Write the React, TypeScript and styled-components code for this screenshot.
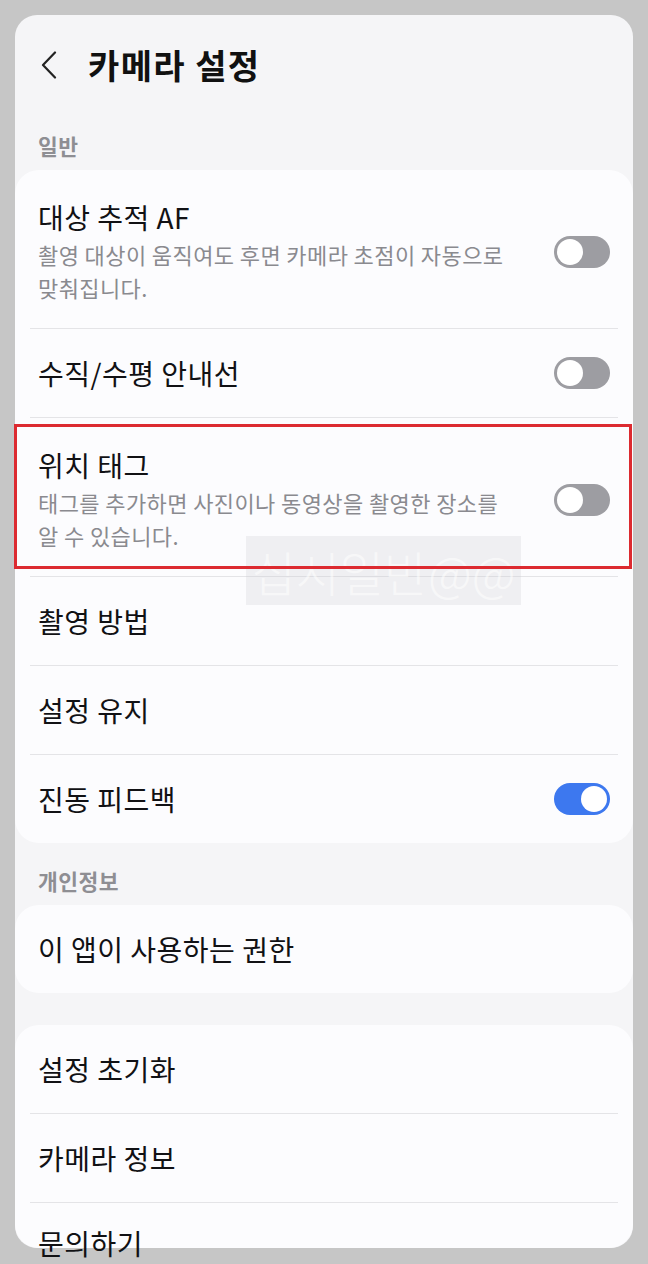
import React from "react";
import styled, { createGlobalStyle } from "styled-components";

const GlobalStyle = createGlobalStyle`
  html, body {
    margin: 0;
    padding: 0;
    overflow: hidden;
    background: #c6c6c6;
  }
  body {
    font-family: "Noto Sans CJK KR", "Noto Sans", sans-serif;
    color: #111114;
  }
`;

const Screen = styled.div`
  padding: 15px;
  height: 1264px;
  box-sizing: border-box;
`;

const Frame = styled.div`
  position: relative;
  height: 1233px;
  background: #f5f5f7;
  border-radius: 22px;
  display: flex;
  flex-direction: column;
`;

const Header = styled.header`
  display: flex;
  align-items: center;
  gap: 29px;
  padding: 28px 24px 21px;
  height: 44px;
`;

const BackButton = styled.button`
  border: 0;
  background: none;
  padding: 0;
  width: 20px;
  height: 30px;
  display: flex;
  align-items: center;
  justify-content: center;
  color: #222;
`;

const Title = styled.h1`
  margin: 0;
  font-size: 34px;
  line-height: 44px;
  font-weight: 700;
  color: #111;
  letter-spacing: 1.4px;
`;

const SectionLabel = styled.div`
  padding: 24px 23px 10px;
  font-size: 21.5px;
  line-height: 28px;
  font-weight: 700;
  color: #8e8e93;
  letter-spacing: 0.5px;
`;

const Card = styled.section<{ $gapTop?: number; $fixedHeight?: number }>`
  background: #fcfcfe;
  border-radius: 24px;
  margin-top: ${(p) => p.$gapTop ?? 0}px;
  ${(p) => (p.$fixedHeight ? `height: ${p.$fixedHeight}px;` : "")}
  display: flex;
  flex-direction: column;
`;

const Row = styled.div<{ $multi?: boolean; $highlight?: boolean; $h?: number }>`
  position: relative;
  display: flex;
  align-items: center;
  justify-content: space-between;
  gap: 20px;
  box-sizing: border-box;
  min-height: ${(p) => p.$h ?? 88}px;
  padding: ${(p) => (p.$multi ? "29px 23px 24px" : "0 23px")};
  flex-shrink: 0;
  ${(p) =>
    p.$highlight
      ? `
    &::after {
      content: "";
      position: absolute;
      top: 6px;
      bottom: 7px;
      left: -1px;
      right: 1px;
      border: 3px solid #dc2a30;
      z-index: 3;
      pointer-events: none;
    }
  `
      : ""}
`;

const Divider = styled.div`
  height: 1px;
  margin: 0 15px;
  background: #e4e4e7;
  flex-shrink: 0;
`;

const TextCol = styled.div`
  display: flex;
  flex-direction: column;
  gap: 3px;
  min-width: 0;
`;

const RowTitle = styled.div`
  font-size: 28px;
  line-height: 36px;
  font-weight: 400;
  color: #111114;
  letter-spacing: 0.5px;
  white-space: nowrap;
`;

const RowSub = styled.div`
  font-size: 22px;
  line-height: 33px;
  color: #8a8a8f;
  letter-spacing: 0.4px;
  white-space: nowrap;
`;

const Track = styled.div<{ $on?: boolean }>`
  position: relative;
  flex-shrink: 0;
  width: 56px;
  height: 32px;
  border-radius: 16px;
  background: ${(p) => (p.$on ? "#3d78ef" : "#9d9da2")};
`;

const Knob = styled.div<{ $on?: boolean }>`
  position: absolute;
  top: 3px;
  ${(p) => (p.$on ? "right: 3px;" : "left: 3px;")}
  width: 26px;
  height: 26px;
  border-radius: 50%;
  background: #ffffff;
`;

const Watermark = styled.div`
  position: absolute;
  left: 231px;
  top: 521px;
  width: 275px;
  height: 69px;
  background: rgba(205, 205, 212, 0.28);
  display: flex;
  align-items: center;
  justify-content: center;
  font-size: 48px;
  font-weight: 300;
  color: rgba(255, 255, 255, 0.55);
  z-index: 2;
  white-space: nowrap;
  overflow: hidden;
  pointer-events: none;
`;

const Toggle = ({ on }: { on?: boolean }) => (
  <Track $on={on}>
    <Knob $on={on} />
  </Track>
);

type Item = {
  title: string;
  sub?: React.ReactNode;
  toggle?: "on" | "off";
  highlight?: boolean;
  h?: number;
};

const general: Item[] = [
  {
    title: "대상 추적 AF",
    sub: (
      <>
        촬영 대상이 움직여도 후면 카메라 초점이 자동으로
        <br />
        맞춰집니다.
      </>
    ),
    toggle: "off",
  },
  { title: "수직/수평 안내선", toggle: "off" },
  {
    title: "위치 태그",
    sub: (
      <>
        태그를 추가하면 사진이나 동영상을 촬영한 장소를
        <br />알 수 있습니다.
      </>
    ),
    toggle: "off",
    highlight: true,
  },
  { title: "촬영 방법" },
  { title: "설정 유지" },
  { title: "진동 피드백", toggle: "on" },
];

const renderRows = (items: Item[]) =>
  items.map((it, i) => (
    <React.Fragment key={it.title}>
      {i > 0 && <Divider />}
      <Row $multi={!!it.sub} $highlight={it.highlight} $h={it.h}>
        <TextCol>
          <RowTitle>{it.title}</RowTitle>
          {it.sub && <RowSub>{it.sub}</RowSub>}
        </TextCol>
        {it.toggle && <Toggle on={it.toggle === "on"} />}
      </Row>
    </React.Fragment>
  ));

export default function App() {
  return (
    <>
      <GlobalStyle />
      <Screen>
        <Frame>
          <Header>
            <BackButton aria-label="뒤로">
              <svg width="18" height="28" viewBox="0 0 18 28" fill="none">
                <path
                  d="M15 1.5 L3 14 L15 26.5"
                  stroke="#222"
                  strokeWidth="2.2"
                  strokeLinecap="round"
                  strokeLinejoin="round"
                />
              </svg>
            </BackButton>
            <Title>카메라 설정</Title>
          </Header>

          <SectionLabel>일반</SectionLabel>
          <Card>{renderRows(general)}</Card>

          <SectionLabel>개인정보</SectionLabel>
          <Card>{renderRows([{ title: "이 앱이 사용하는 권한" }])}</Card>

          <Card $gapTop={32} $fixedHeight={223}>
            {renderRows([
              { title: "설정 초기화" },
              { title: "카메라 정보" },
              { title: "문의하기", h: 80 },
            ])}
          </Card>

          <Watermark>십시일반@@</Watermark>
        </Frame>
      </Screen>
    </>
  );
}
